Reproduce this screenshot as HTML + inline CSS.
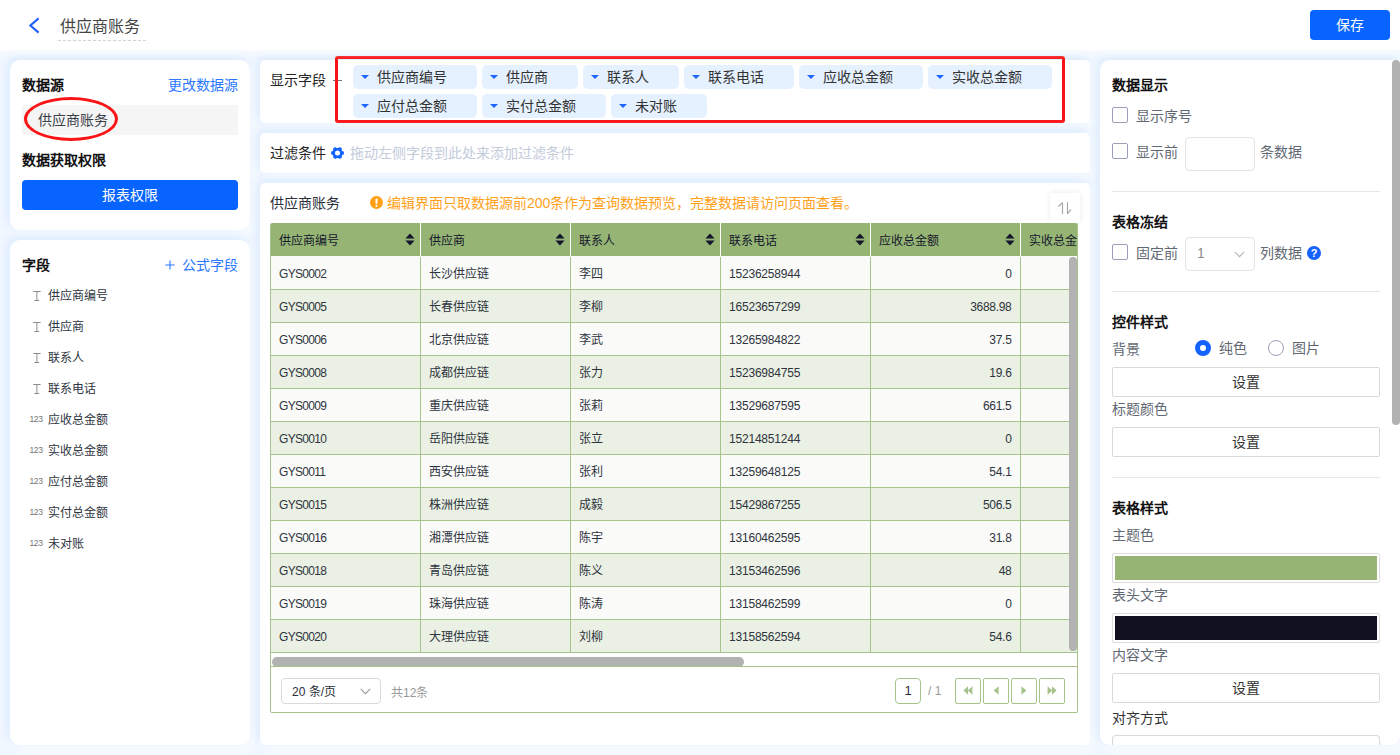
<!DOCTYPE html>
<html lang="zh-CN">
<head>
<meta charset="utf-8">
<title>供应商账务</title>
<style>
*{box-sizing:border-box;margin:0;padding:0}
html,body{width:1400px;height:755px;overflow:hidden}
body{font-family:"Liberation Sans",sans-serif;font-size:14px;color:#333;background:#f1f7ff;position:relative}
.abs{position:absolute}
.hdr{position:absolute;left:0;top:0;width:1400px;height:50px;background:#fff;box-shadow:0 3px 6px #fafcff;z-index:2}
.title{position:absolute;left:58px;top:13px;padding-top:1px;width:88px;height:28px;line-height:26px;font-size:16px;color:#444;padding-left:2px;border-bottom:1px dashed #d4d4d4;white-space:nowrap}
.save{position:absolute;left:1310px;top:10px;width:80px;height:30px;line-height:30px;border-radius:4px;background:#0764ff;color:#fff;text-align:center;font-size:14px}
.panel{position:absolute;background:#fff;border-radius:10px;box-shadow:-3px -3px 8px 1px #dfedfe,4px 4px 8px 1px #fafcff}
.mpanel{position:absolute;background:#fff;border-radius:5px;box-shadow:-3px -3px 8px 1px #dfedfe,4px 4px 8px 1px #fafcff}
.b{font-weight:bold;color:#111}
.t{position:absolute;white-space:nowrap;line-height:20px;height:20px}
.link{color:#2a78ff}
.tag{position:absolute;height:24px;line-height:24px;background:#e5f1ff;border-radius:5px;padding-left:24px;color:#333;white-space:nowrap}
.tag i{position:absolute;left:8.3px;top:10.1px;width:0;height:0;border-left:4.4px solid transparent;border-right:4.4px solid transparent;border-top:4.6px solid #1f66ff}
.tbl{position:absolute;left:10px;top:40px;width:808px;height:490px;border:1px solid #a6c38c;border-top:none;border-radius:2px;overflow:hidden;font-size:12px;color:#2e3440}
.thead{position:absolute;left:0;top:0;width:960px;height:34px;background:#96b575;border-bottom:1px solid #fafaf8;display:flex;color:#15152b}
.th{position:relative;width:150px;height:33px;line-height:36px;padding-left:8px;border-right:1px solid #fff;white-space:nowrap}
.so{position:absolute;right:5px;top:9.5px}
.tr{position:absolute;left:0;width:960px;height:33px;display:flex;background:#fafaf8;border-bottom:1px solid #a6c38c}
.tr.ev{background:#eaf0e3}
.td{width:150px;height:32px;line-height:35px;padding-left:8px;overflow:hidden;border-right:1px solid #a6c38c;white-space:nowrap}
.td:first-child{letter-spacing:-0.7px}
.td:nth-child(4){letter-spacing:-0.2px}
.td.r{letter-spacing:-0.3px;text-align:right;padding-right:8.5px;padding-left:0}
.vsb{position:absolute;left:798px;top:34px;width:8px;height:394px;border-radius:4px;background:#b2b2b2}
.hsb{position:absolute;left:0.5px;top:434px;width:472px;height:9.5px;border-radius:5px;background:#b2b2b2}
.pg{position:absolute;left:0;top:443px;width:806px;height:47px;border-top:1px solid #a6c38c;background:#fff}
.sel{position:absolute;left:10px;top:11px;width:100px;height:26px;border:1px solid #d9d9d9;border-radius:4px;line-height:27px;padding-left:10px;color:#2a2f3a;white-space:nowrap}
.pn{position:absolute;left:624px;top:11px;width:26px;height:26px;border:1px solid #a6c38c;border-radius:4px;line-height:24px;text-align:center;color:#2a2f3a;font-size:13px}
.pb{position:absolute;top:11px;width:26px;height:26px;border:1px solid #a6c38c;border-radius:2px;display:flex;align-items:center;justify-content:center;padding-bottom:1.5px}
.tr:nth-of-type(2){top:34px}
.tr:nth-of-type(3){top:67px}
.tr:nth-of-type(4){top:100px}
.tr:nth-of-type(5){top:133px}
.tr:nth-of-type(6){top:166px}
.tr:nth-of-type(7){top:199px}
.tr:nth-of-type(8){top:232px}
.tr:nth-of-type(9){top:265px}
.tr:nth-of-type(10){top:298px}
.tr:nth-of-type(11){top:331px}
.tr:nth-of-type(12){top:364px}
.tr:nth-of-type(13){top:397px}
.g{color:#626873}
.d{color:#333}
.cb{position:absolute;width:16px;height:16px;border:1px solid #9a9eb8;border-radius:2px;background:#fff}
.ip{position:absolute;width:70px;height:34px;border:1px solid #e2e2e2;border-radius:4px;background:#fff}
.hr{position:absolute;left:12px;width:268px;height:1px;background:#e6e6e6}
.sb{position:absolute;left:12px;width:268px;height:30px;border:1px solid #d9d9d9;border-radius:2px;background:#fff;text-align:center;line-height:28px;color:#333}
.sw{position:absolute;left:12px;width:268px;height:30px;border:1px solid #dcdcdc;border-radius:2px;background:#fff;padding:2px}
.sw div{width:100%;height:100%}
.f{font-size:12px;color:#2f3541}
.num{font-size:8.5px;line-height:12px;color:#747474;letter-spacing:-0.4px}
</style>
</head>
<body>
<!-- header -->
<div class="hdr">
  <svg class="abs" style="left:27px;top:15px" width="16" height="21" viewBox="0 0 16 21"><polyline points="11.6,3.4 3.4,10.5 11.6,17.6" fill="none" stroke="#1f5fff" stroke-width="2.1" stroke-linecap="butt" stroke-linejoin="miter"/></svg>
  <div class="title">供应商账务</div>
  <div class="save">保存</div>
</div>

<!-- LEFT-1 -->
<div class="panel" id="l1" style="left:10px;top:60px;width:240px;height:170px">
  <div class="t b" style="left:12px;top:15px">数据源</div>
  <div class="t link" style="right:12px;top:15px">更改数据源</div>
  <div class="abs" style="left:12px;top:45px;width:216px;height:30px;background:#f5f5f5;border-radius:2px;line-height:30px;padding-left:16px;color:#3a3f4a">供应商账务</div>
  <div class="abs" style="left:14px;top:37px;width:94px;height:44px;border:3.4px solid #fa1416;border-radius:50%"></div>
  <div class="t b" style="left:12px;top:90px">数据获取权限</div>
  <div class="abs" style="left:12px;top:120px;width:216px;height:30px;border-radius:4px;background:#0764ff;color:#fff;text-align:center;line-height:30px">报表权限</div>
</div>
<!-- LEFT-2 -->
<div class="panel" id="l2" style="left:10px;top:240px;width:240px;height:505px">
  <div class="t b" style="left:12px;top:15px">字段</div>
  <svg class="abs" style="left:155px;top:20px" width="10" height="10" viewBox="0 0 10 10"><path d="M5 0.4V9.6M0.4 5H9.6" stroke="#2a78ff" stroke-width="1.1" fill="none"/></svg>
  <div class="t link" style="right:12px;top:15px">公式字段</div>
  <svg class="abs" style="left:22px;top:50px" width="10" height="12" viewBox="0 0 10 12"><path d="M1.2 1.5H8.6M4.9 1.5V10.5M2.4 10.5H7.2" fill="none" stroke="#8d8d8d" stroke-width="1"/></svg><div class="t f" style="left:38px;top:46px">供应商编号</div>
  <svg class="abs" style="left:22px;top:81px" width="10" height="12" viewBox="0 0 10 12"><path d="M1.2 1.5H8.6M4.9 1.5V10.5M2.4 10.5H7.2" fill="none" stroke="#8d8d8d" stroke-width="1"/></svg><div class="t f" style="left:38px;top:77px">供应商</div>
  <svg class="abs" style="left:22px;top:112px" width="10" height="12" viewBox="0 0 10 12"><path d="M1.2 1.5H8.6M4.9 1.5V10.5M2.4 10.5H7.2" fill="none" stroke="#8d8d8d" stroke-width="1"/></svg><div class="t f" style="left:38px;top:108px">联系人</div>
  <svg class="abs" style="left:22px;top:143px" width="10" height="12" viewBox="0 0 10 12"><path d="M1.2 1.5H8.6M4.9 1.5V10.5M2.4 10.5H7.2" fill="none" stroke="#8d8d8d" stroke-width="1"/></svg><div class="t f" style="left:38px;top:139px">联系电话</div>
  <div class="abs num" style="left:19.5px;top:173px">123</div><div class="t f" style="left:38px;top:170px">应收总金额</div>
  <div class="abs num" style="left:19.5px;top:204px">123</div><div class="t f" style="left:38px;top:201px">实收总金额</div>
  <div class="abs num" style="left:19.5px;top:235px">123</div><div class="t f" style="left:38px;top:232px">应付总金额</div>
  <div class="abs num" style="left:19.5px;top:266px">123</div><div class="t f" style="left:38px;top:263px">实付总金额</div>
  <div class="abs num" style="left:19.5px;top:297px">123</div><div class="t f" style="left:38px;top:294px">未对账</div>
</div>
<!-- MID -->
<div class="mpanel" id="m1" style="left:260px;top:60px;width:830px;height:63px">
  <div class="t" style="left:10px;top:10px;color:#222">显示字段</div>
  <div class="abs" style="left:73px;top:20px;width:9px;height:1px;background:#777"></div>
  <div class="tag" style="left:93px;top:5px;width:124px"><i></i>供应商编号</div>
  <div class="tag" style="left:222px;top:5px;width:96px"><i></i>供应商</div>
  <div class="tag" style="left:323px;top:5px;width:96px"><i></i>联系人</div>
  <div class="tag" style="left:424px;top:5px;width:110px"><i></i>联系电话</div>
  <div class="tag" style="left:539px;top:5px;width:124px"><i></i>应收总金额</div>
  <div class="tag" style="left:668px;top:5px;width:124px"><i></i>实收总金额</div>
  <div class="tag" style="left:93px;top:34px;width:124px"><i></i>应付总金额</div>
  <div class="tag" style="left:222px;top:34px;width:124px"><i></i>实付总金额</div>
  <div class="tag" style="left:351px;top:34px;width:96px"><i></i>未对账</div>
  <div class="abs" style="left:75px;top:-4px;width:730px;height:67px;border:3px solid #fa1416;border-radius:3px"></div>
</div>
<div class="mpanel" id="m2" style="left:260px;top:133px;width:830px;height:40px">
  <div class="t" style="left:10px;top:10px;color:#222">过滤条件</div>
  <svg class="abs" style="left:70px;top:13px" width="15" height="14" viewBox="-7.5 -7 15 14"><g fill="#1263ff" transform="scale(1,0.95) rotate(30)"><circle r="5.2"/><g id="th"><rect x="-1.9" y="-6.4" width="3.8" height="3.4" rx="1.1"/></g><use href="#th" transform="rotate(60)"/><use href="#th" transform="rotate(120)"/><use href="#th" transform="rotate(180)"/><use href="#th" transform="rotate(240)"/><use href="#th" transform="rotate(300)"/></g><circle r="2.5" fill="#fff"/></svg>
  <div class="t" style="left:90px;top:10px;color:#c3cbdb">拖动左侧字段到此处来添加过滤条件</div>
</div>
<div class="mpanel" id="m3" style="left:260px;top:183px;width:830px;height:562px">
  <div class="t" style="left:10px;top:10px;color:#2a2f3a">供应商账务</div>
  <svg class="abs" style="left:110px;top:13px" width="13" height="13" viewBox="0 0 13 13"><circle cx="6.5" cy="6.5" r="6.5" fill="#ff9f12"/><rect x="5.5" y="2.6" width="2" height="5.4" rx="0.7" fill="#fff"/><circle cx="6.5" cy="9.9" r="1.1" fill="#fff"/></svg>
  <div class="t" style="left:127px;top:10px;color:#ff9f1a">编辑界面只取数据源前200条作为查询数据预览，完整数据请访问页面查看。</div>
  <div class="abs" style="left:790px;top:10px;width:30px;height:30px;background:#fff;border-radius:1px;box-shadow:0 0 5px rgba(120,110,170,.16)">
    <svg class="abs" style="left:7px;top:8px" width="16" height="14" viewBox="0 0 16 14"><path d="M5.5 13.2V1.6L1.4 5.5M10.5 1.2V12.8L13.9 8.3" fill="none" stroke="#a6a6a6" stroke-width="1.15" stroke-linejoin="bevel"/></svg>
  </div>
  <div class="tbl">
    <div class="thead"><div class="th">供应商编号<svg class="so" width="10" height="13" viewBox="0 0 10 13"><path d="M0.4 5.4L5 0.6L9.6 5.4ZM0.4 7.6L5 12.4L9.6 7.6Z" fill="#15152b"/></svg></div><div class="th">供应商<svg class="so" width="10" height="13" viewBox="0 0 10 13"><path d="M0.4 5.4L5 0.6L9.6 5.4ZM0.4 7.6L5 12.4L9.6 7.6Z" fill="#15152b"/></svg></div><div class="th">联系人<svg class="so" width="10" height="13" viewBox="0 0 10 13"><path d="M0.4 5.4L5 0.6L9.6 5.4ZM0.4 7.6L5 12.4L9.6 7.6Z" fill="#15152b"/></svg></div><div class="th">联系电话<svg class="so" width="10" height="13" viewBox="0 0 10 13"><path d="M0.4 5.4L5 0.6L9.6 5.4ZM0.4 7.6L5 12.4L9.6 7.6Z" fill="#15152b"/></svg></div><div class="th">应收总金额<svg class="so" width="10" height="13" viewBox="0 0 10 13"><path d="M0.4 5.4L5 0.6L9.6 5.4ZM0.4 7.6L5 12.4L9.6 7.6Z" fill="#15152b"/></svg></div><div class="th">实收总金额</div></div>
    <div class="tr"><div class="td">GYS0002</div><div class="td">长沙供应链</div><div class="td">李四</div><div class="td">15236258944</div><div class="td r">0</div><div class="td"></div></div>
    <div class="tr ev"><div class="td">GYS0005</div><div class="td">长春供应链</div><div class="td">李柳</div><div class="td">16523657299</div><div class="td r">3688.98</div><div class="td"></div></div>
    <div class="tr"><div class="td">GYS0006</div><div class="td">北京供应链</div><div class="td">李武</div><div class="td">13265984822</div><div class="td r">37.5</div><div class="td"></div></div>
    <div class="tr ev"><div class="td">GYS0008</div><div class="td">成都供应链</div><div class="td">张力</div><div class="td">15236984755</div><div class="td r">19.6</div><div class="td"></div></div>
    <div class="tr"><div class="td">GYS0009</div><div class="td">重庆供应链</div><div class="td">张莉</div><div class="td">13529687595</div><div class="td r">661.5</div><div class="td"></div></div>
    <div class="tr ev"><div class="td">GYS0010</div><div class="td">岳阳供应链</div><div class="td">张立</div><div class="td">15214851244</div><div class="td r">0</div><div class="td"></div></div>
    <div class="tr"><div class="td">GYS0011</div><div class="td">西安供应链</div><div class="td">张利</div><div class="td">13259648125</div><div class="td r">54.1</div><div class="td"></div></div>
    <div class="tr ev"><div class="td">GYS0015</div><div class="td">株洲供应链</div><div class="td">成毅</div><div class="td">15429867255</div><div class="td r">506.5</div><div class="td"></div></div>
    <div class="tr"><div class="td">GYS0016</div><div class="td">湘潭供应链</div><div class="td">陈宇</div><div class="td">13160462595</div><div class="td r">31.8</div><div class="td"></div></div>
    <div class="tr ev"><div class="td">GYS0018</div><div class="td">青岛供应链</div><div class="td">陈义</div><div class="td">13153462596</div><div class="td r">48</div><div class="td"></div></div>
    <div class="tr"><div class="td">GYS0019</div><div class="td">珠海供应链</div><div class="td">陈涛</div><div class="td">13158462599</div><div class="td r">0</div><div class="td"></div></div>
    <div class="tr ev"><div class="td">GYS0020</div><div class="td">大理供应链</div><div class="td">刘柳</div><div class="td">13158562594</div><div class="td r">54.6</div><div class="td"></div></div>
    <div class="vsb"></div>
    <div class="hsb"></div>
    <div class="pg">
      <div class="sel">20 条/页<svg class="abs" style="left:78px;top:9px" width="11" height="7" viewBox="0 0 11 7"><polyline points="0.8,0.9 5.5,5.6 10.2,0.9" fill="none" stroke="#999" stroke-width="1.1"/></svg></div>
      <div class="t" style="left:120px;top:15.5px;font-size:12px;color:#999">共12条</div>
      <div class="pn">1</div>
      <div class="t" style="left:657px;top:14px;font-size:12px;color:#999">/ 1</div>
      <div class="pb" style="left:684px"><svg width="10" height="9" viewBox="0 0 10 9"><path d="M5 0.3V8.7L0.4 4.5ZM9.4 0.3V8.7L4.8 4.5Z" fill="#a6c38c"/></svg></div><div class="pb" style="left:712px"><svg width="6" height="9" viewBox="0 0 6 9"><path d="M5.6 0.3V8.7L0.6 4.5Z" fill="#a6c38c"/></svg></div><div class="pb" style="left:740px"><svg width="6" height="9" viewBox="0 0 6 9"><path d="M0.4 0.3V8.7L5.4 4.5Z" fill="#a6c38c"/></svg></div><div class="pb" style="left:768px"><svg width="10" height="9" viewBox="0 0 10 9"><path d="M0.6 0.3V8.7L5.2 4.5ZM5 0.3V8.7L9.6 4.5Z" fill="#a6c38c"/></svg></div>
    </div>
  </div>
</div>
<!-- RIGHT -->
<div class="panel" id="r1" style="left:1100px;top:60px;width:300px;height:685px;overflow:hidden;border-radius:10px 0 10px 10px">
  <div class="t b" style="left:12px;top:15px">数据显示</div>
  <div class="cb" style="left:12px;top:47px"></div>
  <div class="t g" style="left:36px;top:46px">显示序号</div>
  <div class="cb" style="left:12px;top:83px"></div>
  <div class="t g" style="left:36px;top:82px">显示前</div>
  <div class="ip" style="left:85px;top:77px"></div>
  <div class="t g" style="left:160px;top:82px">条数据</div>
  <div class="hr" style="top:131px"></div>
  <div class="t b" style="left:12px;top:152px">表格冻结</div>
  <div class="cb" style="left:12px;top:184px"></div>
  <div class="t g" style="left:36px;top:183px">固定前</div>
  <div class="ip" style="left:85px;top:177px;line-height:31px;padding-left:11px;color:#8c8c8c">1<svg class="abs" style="left:48px;top:12.5px" width="11" height="7" viewBox="0 0 11 7"><polyline points="0.8,0.9 5.5,5.6 10.2,0.9" fill="none" stroke="#b5b5b5" stroke-width="1.1"/></svg></div>
  <div class="t g" style="left:160px;top:183px">列数据</div>
  <div class="abs" style="left:207px;top:186px;width:14px;height:14px;border-radius:50%;background:#1463ff;color:#fff;font-size:11px;font-weight:bold;line-height:14px;text-align:center">?</div>
  <div class="hr" style="top:231px"></div>
  <div class="t b" style="left:12px;top:252px">控件样式</div>
  <div class="t g" style="left:12px;top:279px">背景</div>
  <div class="abs" style="left:95px;top:280px;width:16px;height:16px;border-radius:50%;border:5px solid #1463ff;background:#fff"></div>
  <div class="t g" style="left:119px;top:278px">纯色</div>
  <div class="abs" style="left:168px;top:280px;width:16px;height:16px;border-radius:50%;border:1px solid #9a9eb8;background:#fff"></div>
  <div class="t g" style="left:192px;top:278px">图片</div>
  <div class="sb" style="top:307px">设置</div>
  <div class="t g" style="left:12px;top:339px">标题颜色</div>
  <div class="sb" style="top:367px">设置</div>
  <div class="hr" style="top:417px"></div>
  <div class="t b" style="left:12px;top:438px">表格样式</div>
  <div class="t g" style="left:12px;top:465px">主题色</div>
  <div class="sw" style="top:493px"><div style="background:#96b575"></div></div>
  <div class="t g" style="left:12px;top:525px">表头文字</div>
  <div class="sw" style="top:553px"><div style="background:#111120"></div></div>
  <div class="t g" style="left:12px;top:585px">内容文字</div>
  <div class="sb" style="top:613px">设置</div>
  <div class="t d" style="left:12px;top:648px">对齐方式</div>
  <div class="sb" style="top:675px;height:20px;border-bottom:none;border-radius:4px 4px 0 0"></div>
  <div class="abs" style="left:292px;top:0;width:8px;height:365px;border-radius:4px;background:#b2b2b2"></div>
</div>
</body>
</html>
